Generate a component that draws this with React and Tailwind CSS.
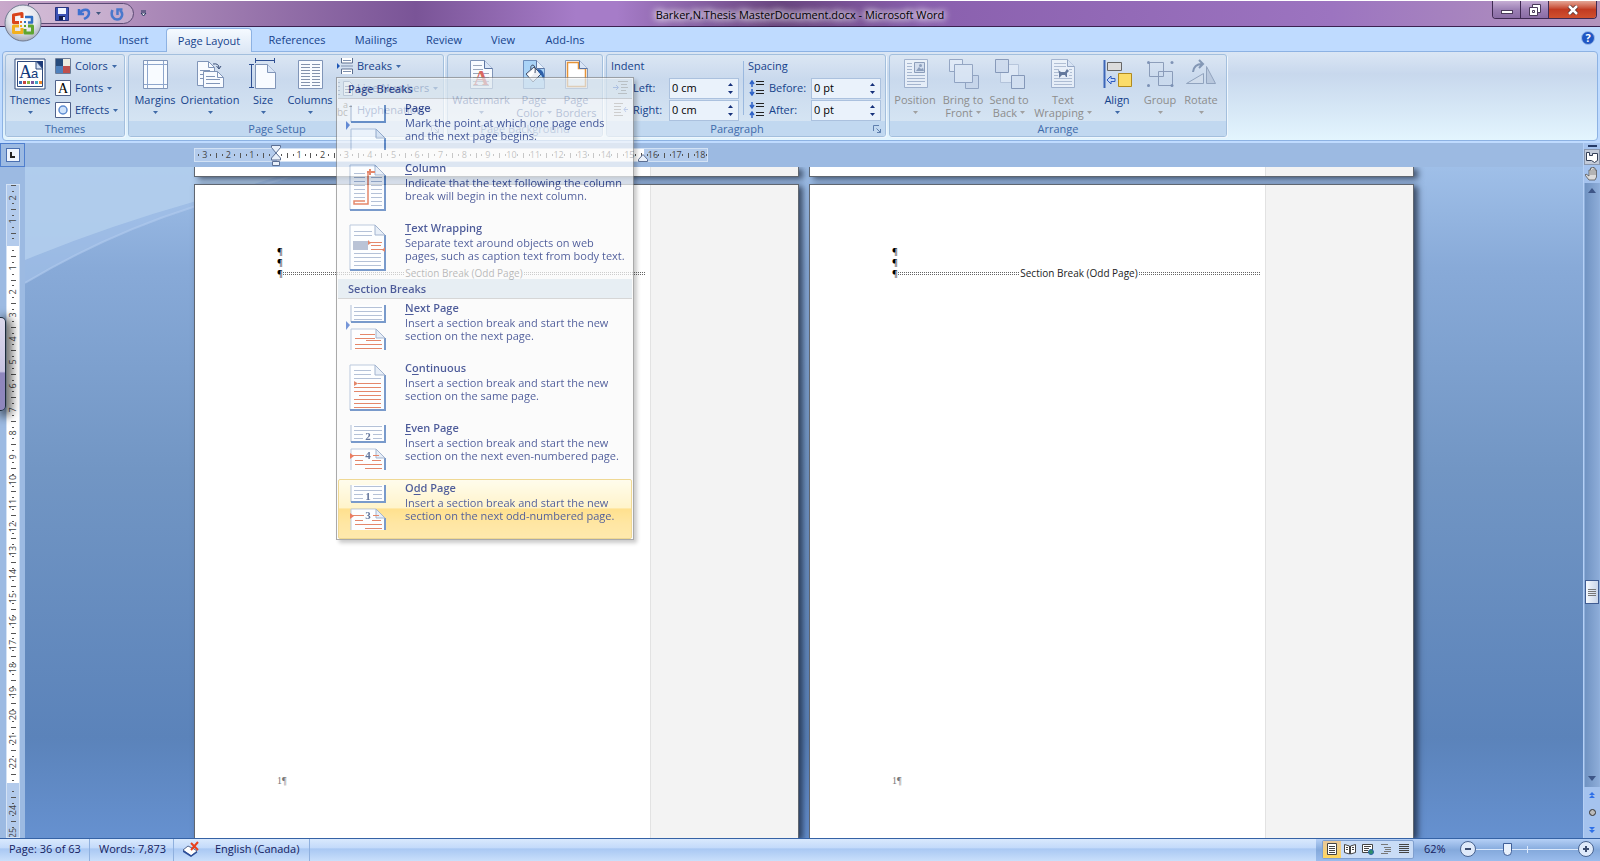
import { clsx } from "clsx";

const tabs = [
  { name: "Home", width: "w-[57px]" },
  { name: "Insert", width: "w-[57px]" },
  { name: "Page Layout", width: "w-[86px]", active: true },
  { name: "References", width: "w-[90px]" },
  { name: "Mailings", width: "w-[68px]" },
  { name: "Review", width: "w-[68px]" },
  { name: "View", width: "w-[50px]" },
  { name: "Add-Ins", width: "w-[74px]" },
];

const pageBreaks = [
  {
    title: ["", "P", "age"],
    lines: ["Mark the point at which one page ends", "and the next page begins."],
    icon: <PageBreakIcon />,
  },
  {
    title: ["", "C", "olumn"],
    lines: ["Indicate that the text following the column", "break will begin in the next column."],
    icon: <ColumnBreakIcon />,
  },
  {
    title: ["", "T", "ext Wrapping"],
    lines: ["Separate text around objects on web", "pages, such as caption text from body text."],
    icon: <WrapBreakIcon />,
  },
];

const sectionBreaks = [
  {
    title: ["", "N", "ext Page"],
    lines: ["Insert a section break and start the new", "section on the next page."],
    icon: <NextPageIcon />,
  },
  {
    title: ["C", "o", "ntinuous"],
    lines: ["Insert a section break and start the new", "section on the same page."],
    icon: <ContinuousIcon />,
  },
  {
    title: ["", "E", "ven Page"],
    lines: ["Insert a section break and start the new", "section on the next even-numbered page."],
    icon: <NumberedIcon first="2" second="4" />,
  },
  {
    title: ["O", "d", "d Page"],
    lines: ["Insert a section break and start the new", "section on the next odd-numbered page."],
    icon: <NumberedIcon first="1" second="3" />,
    active: true,
  },
];

const horizontalMarks = ["3", "2", "1", "", ...Array.from({ length: 18 }, (_, i) => String(i + 1))];
const verticalMarks = ["2", "1", "", ...Array.from({ length: 22 }, (_, i) => String(i + 1)), "", "24", "25"];

/* ---------- menu icons ---------- */

function Sheet({ x = 7, y = 6, w = 35, h = 45 }) {
  const r = x + w;
  return (
    <g>
      <path d={`M${x} ${y}h${w - 10}l10 10v${h - 10}h${-w}z`} fill="#fdfeff" stroke="#9fb3cf" />
      <path d={`M${x} ${y + h}h${w}V${y + 10}`} fill="none" stroke="#3f6fb5" strokeWidth="2" />
      <path d={`M${r - 10} ${y}v10h10z`} fill="#dfe8f5" stroke="#7d95bb" />
    </g>
  );
}

function HalfSheet({ children }) {
  return (
    <g>
      <path d="M8 6v17h34V6" fill="#fdfeff" stroke="#8fa5c5" />
      <path d="M8 23h34V6" fill="none" stroke="#3f6fb5" strokeWidth="2" />
      {children}
    </g>
  );
}

function LowerSheet({ children }) {
  return (
    <g>
      <path d="M8 51V30h25l9 9v12" fill="#fdfeff" stroke="#9fb3cf" />
      <path d="M42 39v12" stroke="#3f6fb5" strokeWidth="2" />
      <path d="M33 30v9h9z" fill="#dfe8f5" stroke="#7d95bb" />
      {children}
    </g>
  );
}

function Lines({ rows, color = "#94a6c6" }) {
  return rows.map(([x, y, w]) => <path key={`${x}-${y}`} d={`M${x} ${y + 0.5}h${w}`} stroke={color} />);
}

function MenuSvg({ children }) {
  return (
    <svg viewBox="0 1 48 56" className="h-14 w-12 shrink-0" aria-hidden="true">
      {children}
    </svg>
  );
}

function PageBreakIcon() {
  return (
    <MenuSvg>
      <HalfSheet />
      <LowerSheet />
      <path d="M3 22l4 4-4 5z" fill="#3c69c7" />
    </MenuSvg>
  );
}

function ColumnBreakIcon() {
  const rows = [14, 18, 22, 26, 30, 34, 38];
  return (
    <MenuSvg>
      <Sheet />
      <Lines rows={rows.map((y) => [11, y, 11])} />
      <Lines rows={[...rows.slice(1), 42, 46].map((y) => [28, y, 11])} />
      <path d="M29 13h-4v32h-14v-3h11" fill="none" stroke="#d9542b" strokeWidth="1.5" />
      <path d="M27 10v6M24 13h8" stroke="#d9542b" strokeWidth="2" />
    </MenuSvg>
  );
}

function WrapBreakIcon() {
  return (
    <MenuSvg>
      <Sheet />
      <Lines rows={[[11, 12, 18], [11, 16, 18], [11, 34, 27], [11, 38, 27], [11, 42, 27], [11, 46, 27]]} />
      <path d="M10 22h15v9H10z" fill="#9caac4" />
      <Lines rows={[[25, 23, 14], [28, 26, 10], [28, 30, 14]]} color="#d9542b" />
      <path d="M25 21l3 3-3 2zM42 28v5l-3-2z" fill="#d9542b" />
    </MenuSvg>
  );
}

function NextPageIcon() {
  return (
    <MenuSvg>
      <HalfSheet>
        <Lines rows={[8, 12, 16, 20].map((y) => [11, y, 28])} />
      </HalfSheet>
      <LowerSheet>
        <Lines rows={[[17, 35, 15], [12, 39, 20], [23, 41, 15], [12, 45, 27], [12, 49, 27]]} color="#d9542b" />
      </LowerSheet>
      <path d="M3 22l4 4-4 5z" fill="#3c69c7" />
    </MenuSvg>
  );
}

function ContinuousIcon() {
  return (
    <MenuSvg>
      <Sheet />
      <Lines rows={[[11, 11, 17], [11, 15, 17], [11, 19, 27]]} />
      <Lines
        rows={[[15, 24, 23], [11, 28, 27], [11, 32, 27], [16, 36, 22], [11, 40, 27], [11, 44, 27], [11, 48, 27]]}
        color="#d9542b"
      />
      <path d="M11 22l4 2.5-4 2.5z" fill="#d9542b" />
    </MenuSvg>
  );
}

function NumberedIcon({ first, second }) {
  return (
    <MenuSvg>
      <HalfSheet>
        <Lines rows={[[11, 7, 28], [11, 11, 28], [11, 15, 9], [30, 15, 9], [11, 19, 9], [30, 19, 9]]} />
        <text x="25" y="21" textAnchor="middle" className="font-['Liberation_Serif'] text-[11px] font-bold" fill="#1f3a72">
          {first}
        </text>
      </HalfSheet>
      <LowerSheet>
        <Lines rows={[[10, 36, 11], [30, 36, 6], [12, 41, 8], [29, 41, 9], [12, 45, 27], [22, 49, 17]]} color="#d9542b" />
        <text x="25" y="40" textAnchor="middle" className="font-['Liberation_Serif'] text-[11px] font-bold" fill="#1f3a72">
          {second}
        </text>
      </LowerSheet>
      <path d="M7 34l4 3-4 3z" fill="#e2451c" />
    </MenuSvg>
  );
}

/* ---------- ribbon icons ---------- */

function BigSvg({ children, faded }) {
  return (
    <svg viewBox="0 0 32 32" className={clsx("h-8 w-8 shrink-0", faded && "opacity-60")} aria-hidden="true">
      {children}
    </svg>
  );
}

function SmallSvg({ children }) {
  return (
    <svg viewBox="0 0 16 16" className="h-4 w-4 shrink-0" aria-hidden="true">
      {children}
    </svg>
  );
}

const paper = { fill: "#f8fbff", stroke: "#8095b8" };

function ThemesIcon() {
  return (
    <BigSvg>
      <path d="M1 1h30v30H1z" fill="#fff" stroke="#2f4a7d" />
      <path d="M3.5 3.5h25v25h-25z" fill="#fff" stroke="#2f4a7d" />
      <path d="M22 3h7v8z" fill="#1d3a78" />
      <path d="M22 3v8h7z" fill="#d7e3f5" stroke="#2f4a7d" />
      <text x="5" y="20" className="font-['Liberation_Serif'] text-[18px]" fill="#12397c">A</text>
      <text x="17" y="20" className="font-['Liberation_Sans'] text-[13px]" fill="#12397c">a</text>
      <path d="M5 23h3v3H5z" fill="#3b6fb6" />
      <path d="M9 23h3v3H9z" fill="#c8443d" />
      <path d="M13 23h3v3h-3z" fill="#8bb043" />
      <path d="M17 23h3v3h-3z" fill="#7a569c" />
      <path d="M21 23h3v3h-3z" fill="#41a5c4" />
      <path d="M25 23h3v3h-3z" fill="#ee8a2c" />
    </BigSvg>
  );
}

function MarginsIcon() {
  return (
    <BigSvg>
      <path d="M4.500 2.500h24v28h-24z" {...paper} />
      <path d="M8.500 3v27M24.500 3v27M5 6.500h23M5 26.500h23" stroke="#8ea6cc" />
    </BigSvg>
  );
}

function OrientationIcon() {
  return (
    <BigSvg>
      <path d="M3.500 3.500h11l6 6v18h-17z" {...paper} />
      <path d="M14.500 3.500v6h6M6 12.500h10M6 16.500h6M6 20.500h4" fill="none" stroke="#8095b8" />
      <path d="M9.500 13.500h14l6 6v10h-20z" {...paper} />
      <path d="M23.500 13.500v6h6M12 18.500h9M12 21.500h14M12 25.500h14" fill="none" stroke="#8095b8" />
      <path d="M19 6q6-1 6 4M22.500 8l2.500 3 2-3" fill="none" stroke="#3a4f78" />
    </BigSvg>
  );
}

function SizeIcon() {
  return (
    <BigSvg>
      <path d="M8.500 6.500h12l8 8v16h-20z" {...paper} />
      <path d="M20.500 6.500v8h8" fill="#d9e5f6" stroke="#8095b8" />
      <path d="M8 2.500h20M8.500 0v5M27.500 0v5M4.500 7v23M2 6.500h5M2 29.500h5" stroke="#2e4f92" />
    </BigSvg>
  );
}

function ColumnsIcon() {
  return (
    <BigSvg>
      <path d="M4.500 2.500h24v28h-24z" {...paper} />
      {[6, 9, 12, 15, 18, 21, 24, 27].map((y) => (
        <path key={y} d={`M7 ${y}.5h9M18 ${y}.5h8`} stroke="#8292ad" />
      ))}
    </BigSvg>
  );
}

function WatermarkIcon() {
  return (
    <BigSvg>
      <path d="M5.500 2.500h14l8 8v20h-22z" {...paper} />
      <path d="M19.500 2.500v8h8" fill="#d9e5f6" stroke="#5d76a3" />
      <path d="M8 7.500h9M8 11.500h10M8 15.500h16M8 19.500h16M8 23.500h16M8 27.500h16" stroke="#9aa6bb" />
      <text x="16" y="27" textAnchor="middle" className="font-['Liberation_Serif'] text-[21px] font-bold" fill="#d9685f">A</text>
    </BigSvg>
  );
}

function PageColorIcon() {
  return (
    <BigSvg>
      <path d="M5.500 2.500h13l8 8v20h-21z" fill="#a9d3f7" stroke="#6c8dbb" />
      <path d="M18.500 2.500v8h8" fill="#e9f2fc" stroke="#5d76a3" />
      <path d="M8 16l8-7 7 7-8 8z" fill="#eceff4" stroke="#43506a" />
      <path d="M10 16l6-5 2 2-6 7z" fill="#fff" />
      <path d="M15 7q-3 0-2 5M15 7q3 1 2 8" fill="none" stroke="#43506a" />
      <path d="M19 11c5 0 8 3 7 12-2-5-3-7-5-8z" fill="#2d5fa9" />
    </BigSvg>
  );
}

function PageBordersIcon() {
  return (
    <BigSvg>
      <path d="M5.500 2.500h14l8 8v20h-22z" {...paper} />
      <path d="M7.500 4.500h11v6h7v18h-18z" fill="#fff" stroke="#e59338" strokeWidth="1.500" />
      <path d="M19.500 2.500v8h8" fill="#d9e5f6" stroke="#5d76a3" />
    </BigSvg>
  );
}

function PositionIcon() {
  return (
    <BigSvg faded>
      <path d="M5.500 1.500h23v28h-23z" {...paper} />
      <path d="M15.500 4.500h10v10h-10z" fill="#d3dded" stroke="#5f7397" />
      <path d="M17 13l3-4 2 2 2-1 1 3z" fill="#60769c" />
      <circle cx="21.500" cy="7.500" r="1.500" fill="#60769c" />
      <path d="M8 5.500h5M8 8.500h5M8 11.500h5M8 14.500h5M8 17.500h18M8 20.500h18M8 23.500h18M8 26.500h14" stroke="#8b9cba" />
    </BigSvg>
  );
}

function BringFrontIcon() {
  return (
    <BigSvg faded>
      <path d="M2.500 1.500h13v12h-13z" fill="#e7effa" stroke="#6b80a6" />
      <path d="M18.500 17.500h13v13h-13z" fill="#c5d3e9" stroke="#6b80a6" />
      <path d="M7.500 6.500h18v18h-18z" fill="#e0eaf7" stroke="#6b80a6" />
    </BigSvg>
  );
}

function SendBackIcon() {
  return (
    <BigSvg faded>
      <path d="M7.500 6.500h18v18h-18z" fill="#e7effa" stroke="#a5b5cf" />
      <path d="M2.500 1.500h13v13h-13z" fill="#cbd8ec" stroke="#566c96" />
      <path d="M18.500 17.500h13v13h-13z" fill="#d6e2f2" stroke="#566c96" />
    </BigSvg>
  );
}

function TextWrappingIcon() {
  return (
    <BigSvg faded>
      <path d="M4.500 1.500h16l7 7v21h-23z" {...paper} />
      <path d="M20.500 1.500v7h7" fill="#d9e5f6" stroke="#6b80a6" />
      <path d="M7 5.500h12M7 8.500h12M7 11.500h5M22 11.500h3M7 14.500h5M23 14.500h2M7 17.500h4M22 17.500h3M7 20.500h18M7 23.500h18M7 26.500h18" stroke="#9aa9c2" />
      <path d="M11 12l3 2h4l2-3 2 2-2 2v4h-1l-1-2h-3l-3 3v-5z" fill="#1f3867" />
    </BigSvg>
  );
}

function AlignIcon() {
  return (
    <BigSvg>
      <path d="M3.500 2v28" stroke="#3c66b8" strokeWidth="2" />
      <path d="M6.500 4.500h14v8h-14z" fill="#dcdcdc" stroke="#666" />
      <path d="M17.500 15.500h13v13h-13z" fill="#fbdc69" stroke="#b08a20" />
      <path d="M6 22l4-4v2.500h4v3h-4V26z" fill="#c5d8f7" stroke="#2f5bc0" />
    </BigSvg>
  );
}

function GroupIcon() {
  return (
    <BigSvg faded>
      <path d="M5.500 4.500h14v14h-14zM14.500 13.500h14v14h-14z" fill="none" stroke="#5e7297" />
      <g fill="#47608f">
        <circle cx="4.500" cy="4.500" r="1.500" />
        <circle cx="28" cy="4.500" r="1.500" />
        <circle cx="4.500" cy="27.500" r="1.500" />
        <circle cx="28" cy="27.500" r="1.500" />
      </g>
    </BigSvg>
  );
}

function RotateIcon() {
  return (
    <BigSvg faded>
      <path d="M1.500 25.500h17v-10z" fill="#d5deeb" stroke="#6b7f9f" />
      <path d="M21.500 8.500v17h9z" fill="#aebdd4" stroke="#6b7f9f" />
      <path d="M8 14q1-8 9-8M14 2l4 4-4 4" fill="none" stroke="#4f688f" strokeWidth="2" />
    </BigSvg>
  );
}

function BreaksIcon() {
  return (
    <SmallSvg>
      <path d="M4.500 0v5h11V0M4.500 16v-5h11v5" fill="#fff" stroke="#5c6f90" />
      <path d="M6 2.500h8M6 13.500h8M4 8h12" stroke="#7e90af" />
      <path d="M0 5l3 3-3 3z" fill="#1d56b5" />
    </SmallSvg>
  );
}

function LineNumbersIcon() {
  return (
    <SmallSvg>
      <path d="M6.500 1.500h6l3 3v11h-9z" fill="#fff" stroke="#7184a6" />
      <path d="M1 2.500h2M1 6.500h2M1 10.500h2M1 14.500h2M8 6.500h6M8 9.500h6M8 12.500h6" stroke="#5a6e94" />
    </SmallSvg>
  );
}

function HyphenationIcon() {
  return (
    <SmallSvg>
      <text x="0" y="14" className="font-['Open_Sans'] text-[10px]" fill="#333">bc</text>
      <text x="6" y="6" className="font-['Open_Sans'] text-[9px]" fill="#333">a</text>
      <path d="M12 4.500h3" stroke="#333" />
    </SmallSvg>
  );
}

function IndentIcon({ flip }) {
  return (
    <SmallSvg>
      {flip ? (
        <>
          <path d="M1 1.500h9M1 4.500h7M1 7.500h7M1 10.500h7M1 13.500h9" stroke="#666" />
          <path d="M15 7.500h-4M13 5l-2 2.500 2 2.500" fill="none" stroke="#3c69c7" />
        </>
      ) : (
        <>
          <path d="M5 1.500h10M8 4.500h6M8 7.500h7M8 10.500h5M5 13.500h9" stroke="#666" />
          <path d="M0 7.500h5M3 5l2.500 2.500L3 10" fill="none" stroke="#3c69c7" />
        </>
      )}
    </SmallSvg>
  );
}

function SpacingIcon({ after }) {
  return (
    <SmallSvg>
      <path d="M7 1.500h8M7 4.500h8M7 10.500h8M7 13.500h8" stroke="#222" />
      <path
        d={after ? "M3 0v5M1 3l2 3 2-3M3 16v-5M1 13l2-3 2 3" : "M3 7V1M1 4l2-3 2 3M3 9v6M1 12l2 3 2-3"}
        fill="none"
        stroke="#2f62c6"
        strokeWidth="1.500"
      />
    </SmallSvg>
  );
}

function Caret({ faded }) {
  return (
    <svg viewBox="0 0 5 3" className={clsx("h-[3px] w-[5px]", faded ? "fill-[#a0a0a0]" : "fill-[#3f6aa8]")} aria-hidden="true">
      <path d="M0 0h5L2.500 3z" />
    </svg>
  );
}

/* ---------- ribbon parts ---------- */

function RibbonGroup({ label, width, launcher, children }) {
  return (
    <section className={clsx("flex shrink-0 flex-col rounded-[3px] border border-[#a3bfdd] bg-linear-to-b from-[#dbe6f3] via-[#c9d9ed] via-30% to-[#d9e8f5] shadow-[1px_1px_0_#f0f7fd]", width)}>
      <div className="flex h-[68px]">{children}</div>
      <div
        className={clsx(
          "relative h-[15px] rounded-b-[2px] bg-[#c1d8f0] text-center leading-[16px] text-[#3e6aaa]",
          launcher && "pr-[18px]",
        )}
      >
        {label}
        {launcher && (
          <button className="absolute top-1 right-1" aria-label={`${label} dialog`}>
            <svg viewBox="0 0 8 8" className="h-2 w-2">
              <path d="M.5 6V.500H6M3.500 3.500l4 4M7.500 4v3.500H4" fill="none" stroke="#5f7fae" />
            </svg>
          </button>
        )}
      </div>
    </section>
  );
}

function BigButton({ icon, label, second, width, faded, plain }) {
  return (
    <button className={clsx("flex flex-col items-center pt-[3px] leading-[13px] whitespace-nowrap", width, faded ? "text-[#8d8d8d]" : "text-[#15428b]")}>
      {icon}
      <span className="mt-[3px]">{label}</span>
      <span className="flex h-[13px] items-center gap-[3px]">
        {second}
        {!plain && <Caret faded={faded} />}
      </span>
    </button>
  );
}

function SmallButton({ icon, label, caret = true }) {
  return (
    <button className="flex h-[22px] items-center gap-1 whitespace-nowrap">
      {icon}
      {label}
      {caret && <Caret />}
    </button>
  );
}

function Spinner({ id, icon, label, value, labelWidth }) {
  return (
    <div className="flex h-[22px] items-center">
      {icon}
      <label htmlFor={id} className={clsx("ml-1", labelWidth)}>
        {label}
      </label>
      <div className="flex h-[21px] w-[70px] border border-[#abc1de] bg-[#eaf2fb]">
        <input id={id} defaultValue={value} className="w-full min-w-0 px-[2px] text-black outline-none" />
        <div className="flex w-4 shrink-0 flex-col items-center justify-center gap-[5px]">
          <button aria-label={`Increase ${label}`}>
            <svg viewBox="0 0 5 3" className="h-[3px] w-[5px] fill-[#15307a]"><path d="M0 3h5L2.500 0z" /></svg>
          </button>
          <button aria-label={`Decrease ${label}`}>
            <svg viewBox="0 0 5 3" className="h-[3px] w-[5px] fill-[#15307a]"><path d="M0 0h5L2.500 3z" /></svg>
          </button>
        </div>
      </div>
    </div>
  );
}

function MenuHeading({ children }) {
  return <div className="h-5 border-b border-[#c5c5c5] bg-[#dde7ee] pl-[10px] font-semibold leading-[19px]">{children}</div>;
}

function MenuItem({ item }) {
  const [before, key, after] = item.title;
  return (
    <button
      role="menuitem"
      className={clsx(
        "flex h-[60px] w-full border pl-1 text-left whitespace-nowrap",
        item.active
          ? "rounded-[2px] border-[#e8c766] bg-[linear-gradient(#fffbe4,#ffefb4_48%,#ffd45e_50%,#ffdc7c_75%,#ffe08a)]"
          : "border-transparent",
      )}
    >
      {item.icon}
      <span className="ml-[14px] block pt-px leading-[13px]">
        <span className="mb-[2px] block font-semibold">
          {before}
          <u className="underline-offset-2">{key}</u>
          {after}
        </span>
        {item.lines.map((line) => (
          <span key={line} className="block">
            {line}
          </span>
        ))}
      </span>
    </button>
  );
}

function BreaksMenu() {
  return (
    <div
      role="menu"
      className="absolute top-full -left-px z-20 w-[298px] border border-[#868686] bg-[#fafafa] p-px pb-0 text-[#00156e] opacity-70 shadow-[3px_3px_4px_rgba(0,0,0,0.3)]"
    >
      <MenuHeading>Page Breaks</MenuHeading>
      {pageBreaks.map((item) => (
        <MenuItem key={item.title.join("")} item={item} />
      ))}
      <MenuHeading>Section Breaks</MenuHeading>
      {sectionBreaks.map((item) => (
        <MenuItem key={item.title.join("")} item={item} />
      ))}
    </div>
  );
}

function Ribbon() {
  return (
    <div className="relative z-10 mx-[2px] flex h-[90px] gap-[3px] rounded-[4px] border border-[#8db2e3] bg-linear-to-b from-[#dbe6f4] via-[#c8d8ed] via-25% to-[#e3f5fe] px-[2px] pt-[2px] pb-[3px]">
      <RibbonGroup label="Themes" width="w-[120px]">
        <BigButton icon={<ThemesIcon />} label="Themes" width="w-12" />
        <div className="ml-px flex flex-col items-start">
          <SmallButton
            label="Colors"
            icon={
              <SmallSvg>
                <path d="M.5.500h15v15H.5z" fill="#fff" stroke="#6b7c98" />
                <path d="M1 1h7v7H1z" fill="#274b7c" />
                <path d="M8 1h7v7H8z" fill="#eeece1" />
                <path d="M1 8h7v7H1z" fill="#4f81bd" />
                <path d="M8 8h7v7H8z" fill="#c0504d" />
              </SmallSvg>
            }
          />
          <SmallButton
            label="Fonts"
            icon={
              <SmallSvg>
                <path d="M.5.500h15v15H.5z" fill="#fff" stroke="#4f628a" />
                <text x="8" y="13" textAnchor="middle" className="font-['Liberation_Serif'] text-[14px]" fill="#000">A</text>
              </SmallSvg>
            }
          />
          <SmallButton
            label="Effects"
            icon={
              <SmallSvg>
                <path d="M.5.500h15v15H.5z" fill="#fff" stroke="#4f628a" />
                <circle cx="8" cy="8" r="4" fill="#cfe3fb" stroke="#5d8bd0" strokeWidth="1.500" />
              </SmallSvg>
            }
          />
        </div>
      </RibbonGroup>

      <RibbonGroup label="Page Setup" width="w-[316px]" launcher>
        <BigButton icon={<MarginsIcon />} label="Margins" width="w-[52px]" />
        <BigButton icon={<OrientationIcon />} label="Orientation" width="w-[58px]" />
        <BigButton icon={<SizeIcon />} label="Size" width="w-12" />
        <BigButton icon={<ColumnsIcon />} label="Columns" width="w-[46px]" />
        <div className="ml-1 flex flex-col items-start">
          <div className="relative">
            <SmallButton icon={<BreaksIcon />} label="Breaks" />
            <BreaksMenu />
          </div>
          <SmallButton icon={<LineNumbersIcon />} label="Line Numbers" />
          <SmallButton icon={<HyphenationIcon />} label="Hyphenation" />
        </div>
      </RibbonGroup>

      <RibbonGroup label="Page Background" width="w-[156px]">
        <BigButton icon={<WatermarkIcon />} label="Watermark" width="w-[66px]" />
        <BigButton icon={<PageColorIcon />} label="Page" second="Color" width="w-10" />
        <BigButton icon={<PageBordersIcon />} label="Page" second="Borders" width="w-11" plain />
      </RibbonGroup>

      <RibbonGroup label="Paragraph" width="w-[280px]" launcher>
        <div className="flex flex-col pl-1">
          <div className="h-[22px] leading-[22px]">Indent</div>
          <div className="pl-[2px]">
            <Spinner id="indent-left" icon={<IndentIcon />} label="Left:" value="0 cm" labelWidth="w-9" />
            <Spinner id="indent-right" icon={<IndentIcon flip />} label="Right:" value="0 cm" labelWidth="w-9" />
          </div>
        </div>
        <div className="my-[6px] ml-1 w-px bg-[#9ab8de]" />
        <div className="flex flex-col pl-1">
          <div className="h-[22px] leading-[22px]">Spacing</div>
          <div className="pl-px">
            <Spinner id="space-before" icon={<SpacingIcon />} label="Before:" value="0 pt" labelWidth="w-[42px]" />
            <Spinner id="space-after" icon={<SpacingIcon after />} label="After:" value="0 pt" labelWidth="w-[42px]" />
          </div>
        </div>
      </RibbonGroup>

      <RibbonGroup label="Arrange" width="w-[338px]">
        <BigButton icon={<PositionIcon />} label="Position" width="w-[50px]" faded />
        <BigButton icon={<BringFrontIcon />} label="Bring to" second="Front" width="w-[46px]" faded />
        <BigButton icon={<SendBackIcon />} label="Send to" second="Back" width="w-[46px]" faded />
        <BigButton icon={<TextWrappingIcon />} label="Text" second="Wrapping" width="w-[62px]" faded />
        <BigButton icon={<AlignIcon />} label="Align" width="w-[46px]" />
        <BigButton icon={<GroupIcon />} label="Group" width="w-10" faded />
        <BigButton icon={<RotateIcon />} label="Rotate" width="w-[42px]" faded />
      </RibbonGroup>
    </div>
  );
}

/* ---------- title bar ---------- */

function OfficeButton() {
  return (
    <button className="absolute top-1 left-1 z-20 h-[38px] w-[38px]" aria-label="Office Button">
      <svg viewBox="0 0 38 38">
        <defs>
          <radialGradient id="orb" cx="50%" cy="35%" r="65%">
            <stop offset="0" stopColor="#fff" />
            <stop offset="0.6" stopColor="#e3e5ec" />
            <stop offset="1" stopColor="#a7adbc" />
          </radialGradient>
        </defs>
        <circle cx="19" cy="19" r="18" fill="url(#orb)" stroke="#707a90" />
        <g fill="none" strokeWidth="3" strokeLinejoin="round">
          <path d="M18 14V9.500L9.500 11v7.500H15" stroke="#d9441b" />
          <path d="M21 13h7v5.500h-4" stroke="#2f6fc4" strokeWidth="2.500" />
          <path d="M15 22H9.500v6.500H18V24" stroke="#f2b01e" />
          <path d="M21 25v4h7.500v-7H24" stroke="#5ea52f" />
        </g>
        <path d="M16 17h2v2h-2z" fill="#e2632a" />
        <path d="M20 17h2v2h-2z" fill="#2f6fc4" />
        <path d="M16 21h2v2h-2z" fill="#f2b01e" />
        <path d="M20 21h2v2h-2z" fill="#5ea52f" />
      </svg>
    </button>
  );
}

function TitleBar() {
  return (
    <header className="relative flex h-[27px] border-t border-b border-t-white border-b-[#3b2150] bg-[#a67cc8]">
      <div className="absolute inset-0 bg-linear-to-r from-[#c9a9cb] from-0% via-[#7a5497] via-26% to-[#a67cc8] to-36%" />
      <div className="absolute inset-y-0 right-0 left-[36%] bg-linear-to-r from-[#a67cc8] from-4% via-[#68457f] via-20% to-[#8a60ae] to-34%" />
      <div className="absolute inset-y-0 right-0 left-[58%] bg-linear-to-r from-[#8a60ae] via-[#9c74c0] via-60% to-[#b394bd]" />
      <div className="relative ml-7 mt-[2px] flex h-[21px] w-[106px] items-center rounded-r-full border border-[#5b4a74] bg-white/25 pl-[26px]">
        <button aria-label="Save" className="h-[14px] w-[14px]">
          <svg viewBox="0 0 14 14">
            <path d="M.5.500h13v13H.5z" fill="#3c52b4" stroke="#26337d" />
            <path d="M3 1h8v6H3z" fill="#f2f6ff" />
            <path d="M4 9h6v4H4z" fill="#111b4d" />
            <path d="M8 10h2v3H8z" fill="#e8ecf8" />
          </svg>
        </button>
        <button aria-label="Undo" className="ml-2 h-[14px] w-[14px]">
          <svg viewBox="0 0 14 14" fill="none" stroke="#3f71cf" strokeWidth="2.500">
            <path d="M2 2v5h5M2.500 6.500C6 1 12 2 12 6s-3 5-5 6" />
          </svg>
        </button>
        <button aria-label="Undo list" className="ml-1 p-px">
          <svg viewBox="0 0 5 3" className="h-[3px] w-[5px] fill-[#42577f]"><path d="M0 0h5L2.500 3z" /></svg>
        </button>
        <button aria-label="Repeat" className="ml-2 h-[14px] w-[14px]">
          <svg viewBox="0 0 14 14" fill="none" stroke="#4a78cc" strokeWidth="2.500">
            <path d="M2.500 3C0 9 4 12.500 7 12.500c5 0 7-6 3-9" />
            <path d="M12.500 2.500H7.500V8" />
          </svg>
        </button>
      </div>
      <button aria-label="Customize toolbar" className="relative ml-[6px] w-2">
        <svg viewBox="0 0 7 7" className="h-[7px] w-[7px]"><path d="M1 1h5M1 3h5L3.500 6z" fill="#fff" stroke="#24345c" /></svg>
      </button>
      <h1 className="absolute inset-x-0 top-[6px] text-center leading-[16px] text-black [text-shadow:0_0_6px_#fff,0_0_8px_#fff,0_0_10px_#fff]">
        Barker,N.Thesis MasterDocument.docx - Microsoft Word
      </h1>
      <div className="absolute top-0 right-[3px] flex h-[18px] overflow-hidden rounded-b-[4px] border border-t-0 border-[#3f2a52]">
        <button aria-label="Minimize" className="flex w-7 items-end justify-center border-r border-[#3f2a52] bg-linear-to-b from-[#c6aed4] via-[#9c80b4] via-50% to-[#8a6ca5] pb-1">
          <span className="h-1 w-3 border border-[#4a3a5a] bg-white" />
        </button>
        <button aria-label="Restore" className="flex w-7 items-center justify-center border-r border-[#3f2a52] bg-linear-to-b from-[#c6aed4] via-[#9c80b4] via-50% to-[#8a6ca5]">
          <svg viewBox="0 0 12 12" className="h-3 w-3" fill="#fff" stroke="#4a3a5a">
            <path d="M3.500.500h8v8h-8z" />
            <path d="M.5 3.500h8v8h-8z" />
            <path d="M3.500 6.500h2v2h-2z" />
          </svg>
        </button>
        <button aria-label="Close" className="flex w-[47px] items-center justify-center bg-linear-to-b from-[#e3a596] via-[#c23b22] via-50% to-[#d0502f]">
          <svg viewBox="0 0 12 10" className="h-[10px] w-3"><path d="M2 1l8 8M10 1L2 9" stroke="#4d2a2a" strokeWidth="4" /><path d="M2 1l8 8M10 1L2 9" stroke="#fff" strokeWidth="2.500" /></svg>
        </button>
      </div>
    </header>
  );
}

function TabBar() {
  return (
    <nav className="flex h-6 bg-[#bfdbff] pl-12">
      {tabs.map((tab) => (
        <button
          key={tab.name}
          className={clsx(
            "text-center text-[#15428b]",
            tab.width,
            tab.active
              ? "relative z-20 mt-px -mb-px ml-1 h-6 rounded-t-[4px] border border-b-0 border-[#8db2e3] bg-linear-to-b from-[#f5faff] to-[#dce7f5] leading-[20px]"
              : "leading-[25px]",
          )}
        >
          {tab.name}
        </button>
      ))}
      <button aria-label="Help" className="mt-1 mr-[5px] ml-auto h-[14px] w-[14px]">
        <svg viewBox="0 0 14 14">
          <circle cx="7" cy="7" r="6.500" fill="#1f56c4" stroke="#9dbbe8" />
          <text x="7" y="11" textAnchor="middle" className="font-['Open_Sans'] text-[11px] font-bold" fill="#fff">?</text>
        </svg>
      </button>
    </nav>
  );
}

/* ---------- rulers ---------- */

function HorizontalRuler() {
  return (
    <div className="relative w-[514px] overflow-hidden border border-[#d3e2f5] bg-[#b3cbec]">
      <div className="absolute inset-y-0 left-[82px] w-[367px] bg-white" />
      <div className="relative -ml-[5px] grid h-3 w-[519px] grid-cols-22 text-[9px] leading-[12px] text-[#444]">
        {horizontalMarks.map((mark, i) => (
          <div key={i} className="grid grid-cols-4 place-items-center">
            <i className="h-[5px] w-px bg-[#555]" />
            <i className="h-[2px] w-px bg-[#555]" />
            <span>{mark}</span>
            <i className="h-[2px] w-px bg-[#555]" />
          </div>
        ))}
      </div>
    </div>
  );
}

function VerticalRuler() {
  return (
    <div className="w-[25px] shrink-0 overflow-hidden bg-[#9cbae2] pt-[17px]">
      <div className="relative ml-[6px] h-full w-[14px] overflow-hidden border border-[#d3e2f5] bg-[#b3cbec]">
        <div className="absolute inset-x-0 top-[61px] bottom-[54px] bg-white" />
        <div className="relative -mt-[2px] grid h-[659px] grid-rows-28 text-[9px] text-[#444]">
          {verticalMarks.map((mark, i) => (
            <div key={i} className="grid min-h-0 grid-rows-4 place-items-center">
              <i className="h-px w-[5px] bg-[#555]" />
              <i className="h-px w-[2px] bg-[#555]" />
              <span className="-rotate-90 leading-[10px]">{mark}</span>
              <i className="h-px w-[2px] bg-[#555]" />
            </div>
          ))}
        </div>
      </div>
    </div>
  );
}

/* ---------- document ---------- */

function DocPage() {
  return (
    <article className="flex w-[605px] border border-b-0 border-[#5f6670] bg-white shadow-[4px_2px_6px_rgba(20,30,50,0.7)]">
      <div className="flex flex-1 flex-col pt-[61px] pr-[5px] pb-[52px] pl-[82px] text-[9px] leading-[11px] text-black">
        <p>¶</p>
        <p>¶</p>
        <p className="flex items-center">
          ¶<span className="h-[3px] flex-1 border-y border-dotted border-[#666]" />
          <span className="px-px text-[10px] text-[#222]">Section Break (Odd Page)</span>
          <span className="h-[3px] flex-1 border-y border-dotted border-[#666]" />
        </p>
        <p className="mt-auto font-['Liberation_Serif'] text-[10px] text-[#777]">1¶</p>
      </div>
      <div className="w-[148px] border-l border-[#e2e2e2] bg-[#f3f3f3]" />
    </article>
  );
}

function PageTail() {
  return (
    <div className="flex h-[10px] w-[605px] border border-t-0 border-[#5f6670] bg-white shadow-[4px_2px_6px_rgba(20,30,50,0.7)]">
      <div className="ml-auto w-[148px] border-l border-[#e2e2e2] bg-[#f3f3f3]" />
    </div>
  );
}

function Workspace() {
  return (
    <main className="relative min-w-0 flex-1 overflow-hidden bg-[linear-gradient(#9fbfe8,#88aad8_15%,#7296c4_45%,#5b83ba_85%,#6691d0)]">
      <svg viewBox="0 0 400 200" className="absolute top-0 left-0 h-[200px] w-[400px]" aria-hidden="true">
        <path d="M0 116Q80 68 168 40T330-10H0z" fill="#a3c1e8" opacity="0.7" />
        <path d="M0 93Q80 60 168 35T310-10H0z" fill="#b4cfee" opacity="0.8" />
        <path d="M0 116Q80 68 168 40T330-10" fill="none" stroke="#b2ccee" opacity="0.6" strokeWidth="2" />
      </svg>
      <div className="relative flex h-full flex-col items-center gap-[7px]">
        <div className="flex gap-[10px]">
          <PageTail />
          <PageTail />
        </div>
        <div className="flex flex-1 gap-[10px]">
          <DocPage />
          <DocPage />
        </div>
      </div>
    </main>
  );
}

function ScrollColumn() {
  return (
    <div className="flex w-[17px] shrink-0 flex-col items-center border-l border-[#b5d0f5] bg-[#a5c3ee]">
      <div className="mt-[2px] h-[2px] w-[9px] bg-[#243a66]" />
      <button aria-label="View ruler" className="mt-[2px] h-4 w-4 border border-[#8a97ad] bg-[#c3cbd9]">
        <svg viewBox="0 0 14 14"><path d="M1.500 2.500h3v3h3v-2h5v7l-3 2-3-2h-5z" fill="#fff" stroke="#333f57" /></svg>
      </button>
      <button aria-label="Pan" className="mt-[2px] h-[14px] w-[14px]">
        <svg viewBox="0 0 14 14">
          <path d="M4 13L0 8l1-1 3 2V3h1.500V1H7V0h1.500v1H10v2h1.500v7L10 13z" fill="#dcdcdc" stroke="#555" strokeWidth="0.800" />
          <path d="M6 3v5M8 2v6M10 3v5" stroke="#777" strokeWidth="0.800" />
        </svg>
      </button>
      <div className="mt-[2px] flex w-full flex-1 flex-col items-center border-x border-[#8fb0dc] bg-linear-to-r from-[#7093c2] to-[#8dacd8]">
        <button aria-label="Scroll up" className="pt-[5px]">
          <svg viewBox="0 0 8 5" className="h-[5px] w-2 fill-[#3e5687]"><path d="M0 5h8L4 0z" /></svg>
        </button>
        <div className="flex w-full flex-1 flex-col items-center">
          <div className="flex-[388]" />
          <div className="flex h-6 w-[14px] flex-col items-center justify-center gap-px border border-[#3f5c92] bg-linear-to-r from-[#f4f8fd] to-[#c9d6ea]">
            <i className="h-px w-2 bg-[#777]" />
            <i className="h-px w-2 bg-[#777]" />
            <i className="h-px w-2 bg-[#777]" />
            <i className="h-px w-2 bg-[#777]" />
          </div>
          <div className="flex-[172]" />
        </div>
        <button aria-label="Scroll down" className="pb-[6px]">
          <svg viewBox="0 0 8 5" className="h-[5px] w-2 fill-[#3e5687]"><path d="M0 0h8L4 5z" /></svg>
        </button>
      </div>
      <div className="flex h-[51px] flex-col items-center justify-around">
        <button aria-label="Previous page">
          <svg viewBox="0 0 6 6" className="h-[6px] w-[6px] fill-[#2e70e8]"><path d="M0 3l3-3 3 3zM0 6l3-3 3 3z" /></svg>
        </button>
        <button aria-label="Select browse object" className="h-[7px] w-[7px] rounded-full border border-[#333] bg-[#bbb]" />
        <button aria-label="Next page">
          <svg viewBox="0 0 6 6" className="h-[6px] w-[6px] fill-[#2e70e8]"><path d="M0 0l3 3 3-3zM0 3l3 3 3-3z" /></svg>
        </button>
      </div>
    </div>
  );
}

/* ---------- status bar ---------- */

function ViewButton({ label, active, children }) {
  return (
    <button aria-label={label} className={clsx("flex h-[17px] w-[18px] items-center justify-center", active && "bg-linear-to-b from-[#e8c89a] to-[#ffd65a]")}>
      <svg viewBox="0 0 12 12" className="h-3 w-3" fill="none" stroke="#444">
        {children}
      </svg>
    </button>
  );
}

function StatusBar() {
  return (
    <footer className="flex h-[23px] border-t border-[#3562a5] bg-[linear-gradient(#d9e9fd,#c3dafa_40%,#a9c8f3_45%,#c9dffb)] leading-[20px] text-[#15215e]">
      <div className="w-[90px] border-r border-[#8fb0de] pl-[9px]">Page: 36 of 63</div>
      <div className="w-[84px] border-r border-[#8fb0de] pl-[9px]">Words: 7,873</div>
      <div className="flex w-[136px] gap-4 border-r border-[#8fb0de] pl-[9px]">
        <svg viewBox="0 0 16 16" className="mt-[2px] h-4 w-4">
          <path d="M0 9l5-4 6 3 3 2-6 5z" fill="#fff" stroke="#53658c" />
          <path d="M0 10l8 5 6-4" fill="none" stroke="#2d4f9a" strokeWidth="1.500" />
          <path d="M8 2l7 7M15 1L8 9" stroke="#e8401c" strokeWidth="2" />
        </svg>
        English (Canada)
      </div>
      <div className="ml-auto flex items-center bg-linear-to-b from-[#b5d0f6] via-[#84a9dc] via-50% to-[#9abcec] pr-[6px] pb-[2px] pl-[6px]">
        <div className="flex rounded-[2px] border border-[#7f9fcf] bg-[#c9dcf6]">
          <ViewButton label="Print Layout" active>
            <path d="M1.500.500h9v11h-9zM3 3.500h6M3 5.500h6M3 7.500h6M3 9.500h6" fill="#fff" />
          </ViewButton>
          <ViewButton label="Full Screen Reading">
            <path d="M.5 1.500l5 1.500v8l-5-1.500zM11.500 1.500L6.500 3v8l5-1.500zM2 4.500h2M2 6.500h2M8 4.500h2M8 6.500h2" fill="#fff" />
          </ViewButton>
          <ViewButton label="Web Layout">
            <path d="M.5 1.500h10v8H.5zM2 3.500h7M2 5.500h5M2 7.500h4" fill="#fff" />
            <circle cx="9" cy="9" r="2.500" fill="#2f8f6a" stroke="#2c62a8" />
          </ViewButton>
          <ViewButton label="Outline">
            <path d="M1 1.500h7M4 4.500h7M5 6.500h6M4 8.500h7M1 10.500h7" stroke="#777" />
          </ViewButton>
          <ViewButton label="Draft">
            <path d="M1 1.500h10M1 3.500h10M1 5.500h10M1 7.500h10M1 9.500h10" />
          </ViewButton>
        </div>
        <button className="ml-[10px] w-9 text-left">62%</button>
        <ZoomButton label="Zoom out" path="M5 8h6" />
        <div className="relative flex w-[102px] items-center">
          <i className="absolute inset-x-0 h-px bg-[#dbe9fc]" />
          <i className="absolute left-1/2 h-[7px] w-px bg-[#dbe9fc]" />
          <input
            type="range"
            aria-label="Zoom"
            defaultValue="29"
            className="relative h-4 w-full appearance-none bg-transparent [&::-webkit-slider-thumb]:h-[13px] [&::-webkit-slider-thumb]:w-[9px] [&::-webkit-slider-thumb]:appearance-none [&::-webkit-slider-thumb]:rounded-b-[5px] [&::-webkit-slider-thumb]:border [&::-webkit-slider-thumb]:border-[#3f5f99] [&::-webkit-slider-thumb]:bg-[#e9f1fc]"
          />
        </div>
        <ZoomButton label="Zoom in" path="M5 8h6M8 5v6" />
      </div>
    </footer>
  );
}

function ZoomButton({ label, path }) {
  return (
    <button aria-label={label} className="h-4 w-4">
      <svg viewBox="0 0 16 16">
        <circle cx="8" cy="8" r="7.500" fill="#dfeafa" stroke="#47628f" />
        <path d={path} stroke="#3b4c6e" strokeWidth="2" />
      </svg>
    </button>
  );
}

export default function App() {
  return (
    <div className="relative flex h-screen flex-col overflow-hidden bg-[#bfdbff] font-['Open_Sans',sans-serif] text-[11px] text-[#15428b]">
      <OfficeButton />
      <TitleBar />
      <TabBar />
      <Ribbon />
      <div className="mt-[2px] flex min-h-0 flex-1">
        <div className="flex min-w-0 flex-1 flex-col">
          <div className="flex h-6 shrink-0 bg-[#9cbae2]">
            <button aria-label="Tab stop" className="flex w-[25px] items-center justify-center border border-[#4f7fce]">
              <span className="flex h-[14px] w-[14px] items-center justify-center border border-[#4a6fb0] bg-[#eef4fd]">
                <i className="h-[6px] w-[5px] border-b-2 border-l-2 border-[#222]" />
              </span>
            </button>
            <div className="flex min-w-0 flex-1 items-start justify-center pt-[5px]">
              <div className="relative w-[1220px]">
                <HorizontalRuler />
                <svg viewBox="0 0 10 22" className="absolute -top-[3px] left-[77px] h-[22px] w-[10px]" fill="#e9f0fa" stroke="#5c6f93">
                  <path d="M.5.500h9v2L5 8 .5 2.500zM5 8l4.500 5v2H.5v-2zM1.500 16.500h7v4h-7z" />
                </svg>
                <svg viewBox="0 0 10 8" className="absolute top-[6px] left-[444px] h-2 w-[10px]" fill="#e9f0fa" stroke="#5c6f93">
                  <path d="M5 .5l4.500 5v2H.5v-2z" />
                </svg>
              </div>
            </div>
          </div>
          <div className="flex min-h-0 flex-1">
            <VerticalRuler />
            <Workspace />
          </div>
        </div>
        <ScrollColumn />
      </div>
      <StatusBar />
      {/* collapsed side gadget peeking in from the screen edge */}
      <div className="absolute top-[317px] left-0 h-[94px] w-[6px] rounded-r-[5px] border border-l-0 border-[#1b2a3a] bg-linear-to-b from-[#dcd8ec] via-[#c9c4e2] via-58% to-[#8f86bd] to-60% shadow-[3px_3px_10px_3px_rgba(0,0,0,0.6)]" />
    </div>
  );
}
